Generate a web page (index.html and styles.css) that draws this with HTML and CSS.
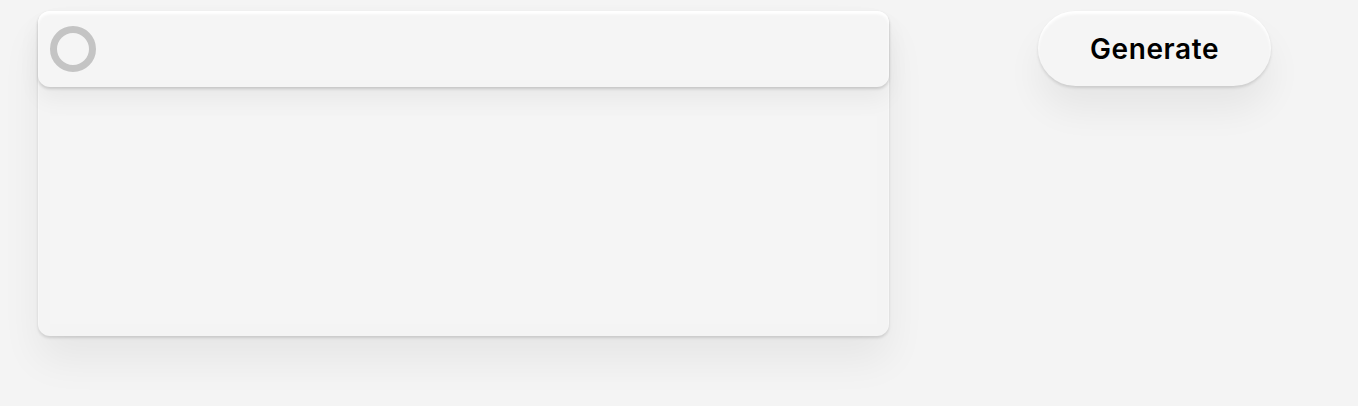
FILE: index.html
```html
<!DOCTYPE html>
<html lang="en">
<head>
  <meta charset="UTF-8" />
  <meta name="viewport" content="width=device-width, initial-scale=1.0"/>
  <title>Generator</title>
  <link rel="stylesheet" href="styles.css">
</head>
<body>
  <div class="page">
    <div class="card">
      <div class="card-head">
        <span class="status-ring"></span>
      </div>
      <div class="card-body">
        <textarea class="output" readonly></textarea>
      </div>
    </div>

    <button class="generate-btn" type="button">Generate</button>
  </div>
</body>
</html>
```

FILE: styles.css
```css
html {
  background: #fff;
}

body {
  margin: 0;
  font-family: 'Inter', 'Liberation Sans', sans-serif;
}

.page {
  background: #f4f4f4;
  height: 406px;
  box-sizing: border-box;
  padding: 11px 0 0 38px;
  display: flex;
  align-items: flex-start;
  gap: 149px;
}

.card {
  width: 851px;
  height: 325px;
  background: #f4f4f4;
  border-radius: 12px;
  box-shadow:
    0 2px 3px rgba(0,0,0,0.13),
    0 24px 40px rgba(0,0,0,0.06),
    inset 0 2px 2px #fff;
  display: flex;
  flex-direction: column;
}

.card-head {
  height: 76px;
  flex-shrink: 0;
  border-radius: 12px;
  background: #f5f5f5;
  box-shadow:
    0 2px 3px rgba(0,0,0,0.15),
    0 12px 22px rgba(0,0,0,0.05),
    inset 0 3px 3px #fff;
  display: flex;
  align-items: center;
  padding: 0 12px;
}

.status-ring {
  width: 32px;
  height: 32px;
  border: 7px solid #c4c4c4;
  border-radius: 50%;
}

.card-body {
  flex: 1;
  padding: 29px 12px 12px;
  display: flex;
}

.output {
  flex: 1;
  resize: none;
  border: none;
  outline: none;
  background: #f5f5f5;
  border-radius: 0;
  font: inherit;
}

.generate-btn {
  width: 233px;
  height: 75px;
  border: none;
  border-radius: 38px;
  background: #f5f5f5;
  font-family: inherit;
  font-size: 28px;
  font-weight: 600;
  letter-spacing: 0.6px;
  color: #000;
  cursor: pointer;
  box-shadow:
    0 2px 3px rgba(0,0,0,0.12),
    0 24px 36px rgba(0,0,0,0.06),
    inset 0 3px 3px #fff;
}
```
